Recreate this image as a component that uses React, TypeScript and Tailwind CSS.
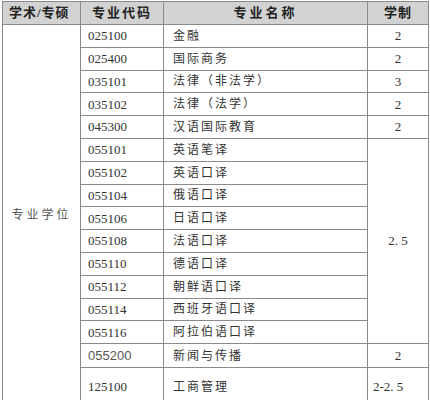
const rows: { code: string; name: string; years?: string; span?: number; sans?: boolean; h: string }[] = [
  { code: "025100", name: "金融", years: "2", h: "h-[22.8px]" },
  { code: "025400", name: "国际商务", years: "2", h: "h-[22.8px]" },
  { code: "035101", name: "法律（非法学）", years: "3", h: "h-[22.8px]" },
  { code: "035102", name: "法律（法学）", years: "2", h: "h-[22.8px]" },
  { code: "045300", name: "汉语国际教育", years: "2", h: "h-[22.8px]" },
  { code: "055101", name: "英语笔译", years: "2. 5", span: 9, h: "h-[22.8px]" },
  { code: "055102", name: "英语口译", h: "h-[22.8px]" },
  { code: "055104", name: "俄语口译", h: "h-[22.8px]" },
  { code: "055106", name: "日语口译", h: "h-[22.8px]" },
  { code: "055108", name: "法语口译", h: "h-[22.8px]" },
  { code: "055110", name: "德语口译", h: "h-[22.8px]" },
  { code: "055112", name: "朝鲜语口译", h: "h-[22.8px]" },
  { code: "055114", name: "西班牙语口译", h: "h-[22.8px]" },
  { code: "055116", name: "阿拉伯语口译", h: "h-[22.8px]" },
  { code: "055200", name: "新闻与传播", years: "2", sans: true, h: "h-[24px]" },
  { code: "125100", name: "工商管理", years: "2-2. 5", h: "h-[38px]" },
];

const cell = "border border-[#8a8a8a] p-0";

export default function App() {
  return (
    <div className="w-[430px] h-[400px] overflow-hidden bg-white pl-[2px] pt-[1px]">
      <table
        className="w-[426px] border-collapse table-fixed text-[#333] text-[13px]"
        style={{ fontFamily: '"Liberation Serif", "Noto Sans CJK SC", serif' }}
      >
        <colgroup>
          <col className="w-[78px]" />
          <col className="w-[83px]" />
          <col className="w-[204px]" />
          <col className="w-[61px]" />
        </colgroup>
        <thead>
          <tr className="h-[23px] bg-[#d2d2d2] font-bold text-[#222]">
            <th className={`${cell} text-left pl-[6px] tracking-[1px]`}>学术/专硕</th>
            <th className={`${cell} text-center tracking-[2px]`}>专业代码</th>
            <th className={`${cell} text-center tracking-[3px]`}>专业名称</th>
            <th className={`${cell} text-center tracking-[1px]`}>学制</th>
          </tr>
        </thead>
        <tbody>
          {rows.map((r, i) => (
            <tr key={r.code} className={r.h}>
              {i === 0 && (
                <td rowSpan={rows.length} className={`${cell} text-center align-middle tracking-[3px] text-[12px] text-[#555]`}>
                  专业学位
                </td>
              )}
              <td
                className={`${cell} pl-[7px] ${r.sans ? "text-[#555]" : ""}`}
                style={r.sans ? { fontFamily: '"Liberation Sans", sans-serif' } : undefined}
              >
                {r.code}
              </td>
              <td className={`${cell} pl-[9px] tracking-[2px] text-[12px]`}>{r.name}</td>
              {r.years !== undefined && (
                <td
                  rowSpan={r.span ?? 1}
                  className={`${cell} align-middle ${r.years.length > 4 ? "text-left pl-[5px]" : "text-center"}`}
                >
                  {r.years}
                </td>
              )}
            </tr>
          ))}
        </tbody>
      </table>
    </div>
  );
}
